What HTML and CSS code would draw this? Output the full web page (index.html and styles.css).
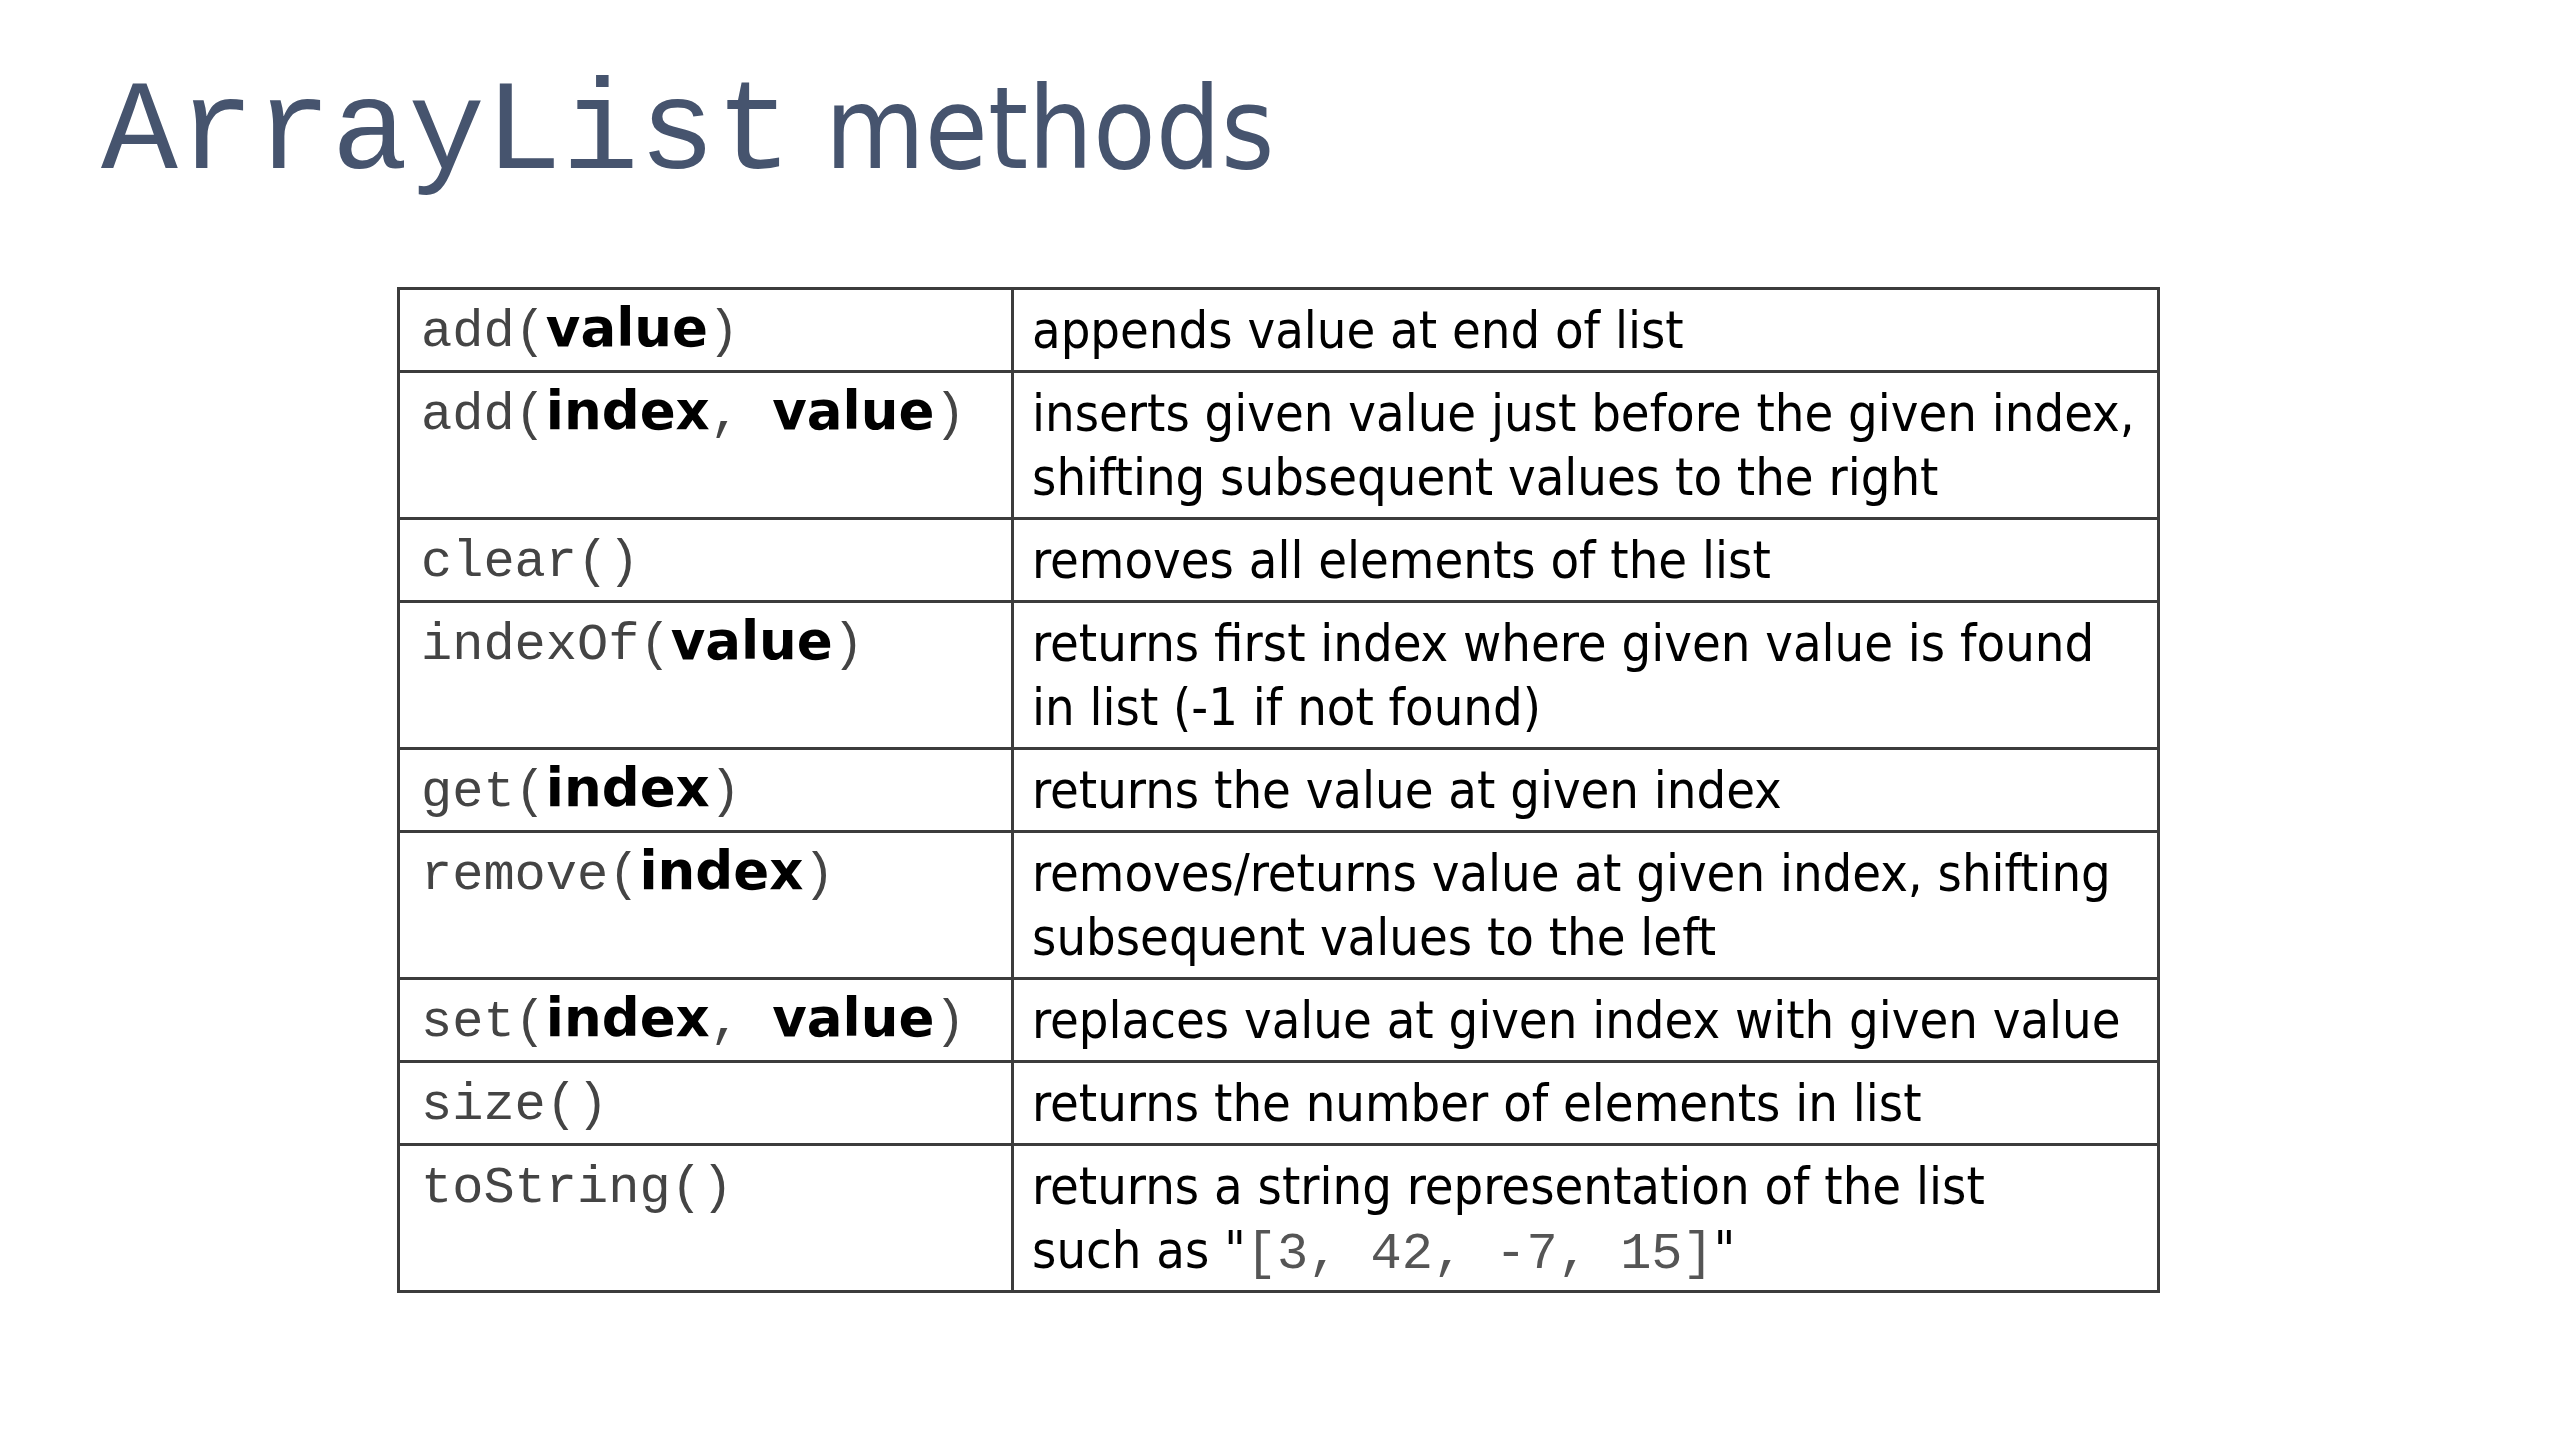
FILE: index.html
```html
<!DOCTYPE html>
<html>
<head>
<meta charset="utf-8">
<title>ArrayList methods</title>
<link rel="stylesheet" href="styles.css">
</head>
<body>
<div class="slide">
  <h1 class="title"><span class="mono">ArrayList</span> methods</h1>
  <table class="methods">
    <colgroup><col class="c1"><col class="c2"></colgroup>
    <tr><td class="sig">add(<b>value</b>)</td><td class="desc">appends value at end of list</td></tr>
    <tr><td class="sig">add(<b>index</b>, <b>value</b>)</td><td class="desc">inserts given value just before the given index,<br>shifting subsequent values to the right</td></tr>
    <tr><td class="sig">clear()</td><td class="desc">removes all elements of the list</td></tr>
    <tr><td class="sig">indexOf(<b>value</b>)</td><td class="desc">returns first index where given value is found<br>in list (-1 if not found)</td></tr>
    <tr><td class="sig">get(<b>index</b>)</td><td class="desc">returns the value at given index</td></tr>
    <tr><td class="sig">remove(<b>index</b>)</td><td class="desc">removes/returns value at given index, shifting<br>subsequent values to the left</td></tr>
    <tr><td class="sig">set(<b>index</b>, <b>value</b>)</td><td class="desc">replaces value at given index with given value</td></tr>
    <tr><td class="sig">size()</td><td class="desc">returns the number of elements in list</td></tr>
    <tr><td class="sig">toString()</td><td class="desc">returns a string representation of the list<br>such as "<span class="code">[3, 42, -7, 15]</span>"</td></tr>
  </table>
</div>
</body>
</html>
```

FILE: styles.css
```css
html, body {
  margin: 0;
  padding: 0;
  background: #ffffff;
}

.slide {
  width: 2560px;
  height: 1440px;
}

.title {
  margin: 0;
  padding: 64px 0 0 101px;
  font-family: "DejaVu Sans Condensed", "DejaVu Sans", sans-serif;
  font-stretch: condensed;
  font-weight: normal;
  font-size: 114px;
  line-height: 130px;
  color: #46546e;
  white-space: nowrap;
}

.title .mono {
  font-family: "Courier New", "Liberation Mono", monospace;
  font-size: 128px;
  line-height: 1;
}

.methods {
  margin: 89px 0 0 397px;
  width: 1763px;
  border-collapse: collapse;
  table-layout: fixed;
}

.methods .c1 { width: 614px; }

.methods td {
  border: 3px solid #3c3c3c;
  padding: 8px 18px;
  vertical-align: top;
  line-height: 64px;
  white-space: nowrap;
}

.methods td.sig {
  font-family: "Courier New", "Liberation Mono", monospace;
  font-size: 52px;
  color: #444444;
  padding: 11px 18px 5px 21px;
}

.sig b {
  font-family: "DejaVu Sans", sans-serif;
  font-weight: bold;
  font-size: 53px;
  line-height: 1;
  color: #000000;
}

.desc {
  font-family: "DejaVu Sans Condensed", "DejaVu Sans", sans-serif;
  font-stretch: condensed;
  font-size: 52px;
  color: #000000;
}

.desc .code {
  font-family: "Courier New", "Liberation Mono", monospace;
  font-size: 52px;
  line-height: 1;
  color: #555555;
}
```
